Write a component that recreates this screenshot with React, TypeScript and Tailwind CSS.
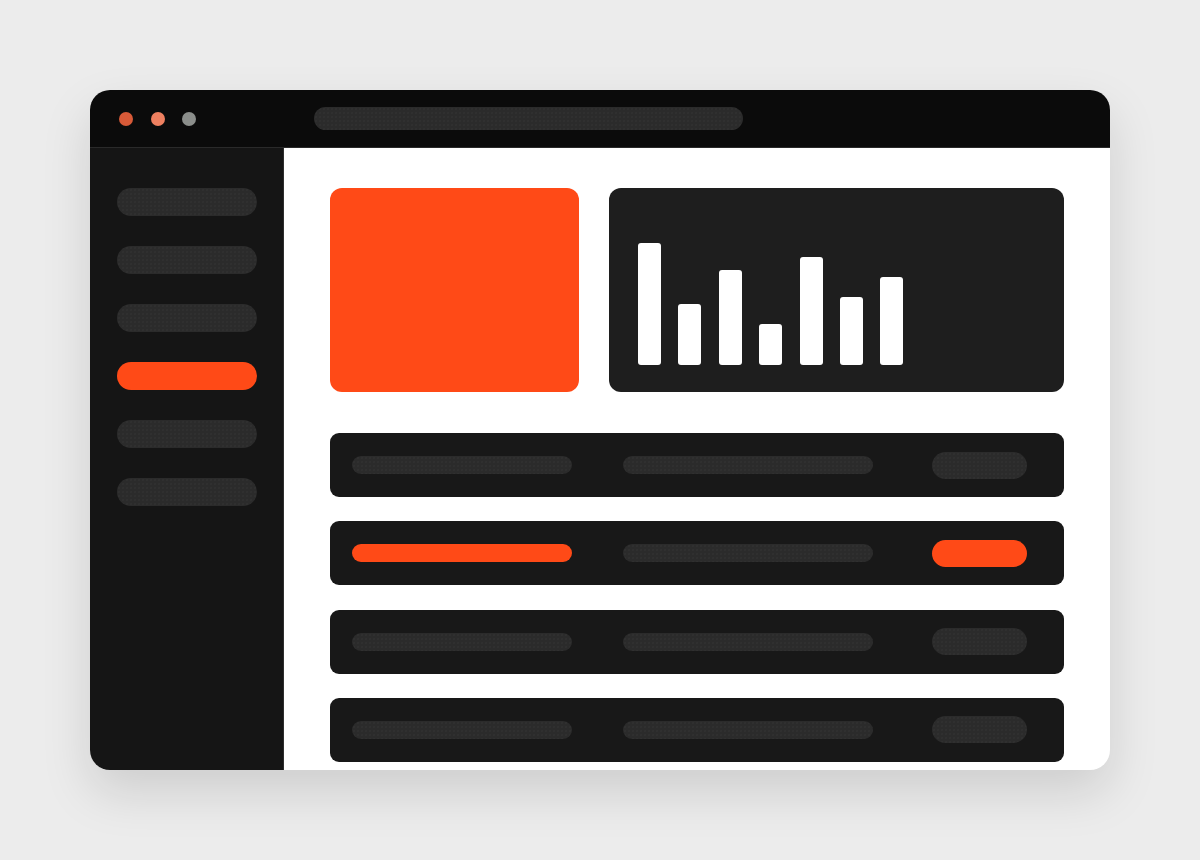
const navItems = [false, false, false, true, false, false]

const bars = [122, 61, 95, 41, 108, 68, 88]

const rows = [false, true, false, false]

const dotted =
  "bg-[#2b2b2b] bg-[radial-gradient(#303030_0.7px,transparent_0.8px)] bg-[length:4px_4px]"

export default function App() {
  return (
    <div className="flex min-h-[860px] w-full items-center justify-center bg-[#ececec]">
      <div className="flex h-[680px] w-[1020px] flex-col overflow-hidden rounded-[20px] bg-white shadow-[0_22px_50px_rgba(0,0,0,0.13)]">
        {/* Title bar */}
        <div className="flex h-[58px] shrink-0 items-center border-b border-[#2a2a2a] bg-[#0b0b0b] pl-[29px]">
          <div className="flex items-center gap-[17.5px]">
            <span className="h-[14px] w-[14px] rounded-full bg-[#d85a38]" />
            <span className="h-[14px] w-[14px] rounded-full bg-[#ee8060]" />
            <span className="h-[14px] w-[14px] rounded-full bg-[#8b8e8b]" />
          </div>
          <div className={`ml-[118px] h-[23px] w-[429px] rounded-full ${dotted}`} />
        </div>

        <div className="flex min-h-0 flex-1">
          {/* Sidebar */}
          <div className="flex w-[194px] shrink-0 flex-col gap-[30px] border-r border-[#2e2e2e] bg-[#151515] pl-[27px] pt-[40px]">
            {navItems.map((active, i) => (
              <div
                key={i}
                className={`h-[28px] w-[140px] rounded-full ${active ? "bg-[#ff4a17]" : dotted}`}
              />
            ))}
          </div>

          {/* Content */}
          <div className="flex flex-1 flex-col px-[46px] pt-[40px]">
            <div className="flex h-[204px] shrink-0 gap-[30px]">
              <div className="w-[249px] rounded-[12px] bg-[#ff4a17]" />
              <div className="flex flex-1 items-end gap-[17.4px] rounded-[12px] bg-[#1e1e1e] pb-[27px] pl-[29px]">
                {bars.map((h, i) => (
                  <div key={i} className="w-[23px] rounded-[3px] bg-white" style={{ height: h }} />
                ))}
              </div>
            </div>

            <div className="mt-[41px] flex flex-col gap-[24.3px]">
              {rows.map((active, i) => (
                <div
                  key={i}
                  className="flex h-[64px] shrink-0 items-center rounded-[9px] bg-[#181818] pl-[22px] pr-[37px]"
                >
                  <div className={`h-[18px] w-[220px] rounded-full ${active ? "bg-[#ff4a17]" : dotted}`} />
                  <div className={`ml-[51px] h-[18px] w-[250px] rounded-full ${dotted}`} />
                  <div
                    className={`ml-auto h-[27px] w-[95px] rounded-full ${active ? "bg-[#ff4a17]" : dotted}`}
                  />
                </div>
              ))}
            </div>
          </div>
        </div>
      </div>
    </div>
  )
}
